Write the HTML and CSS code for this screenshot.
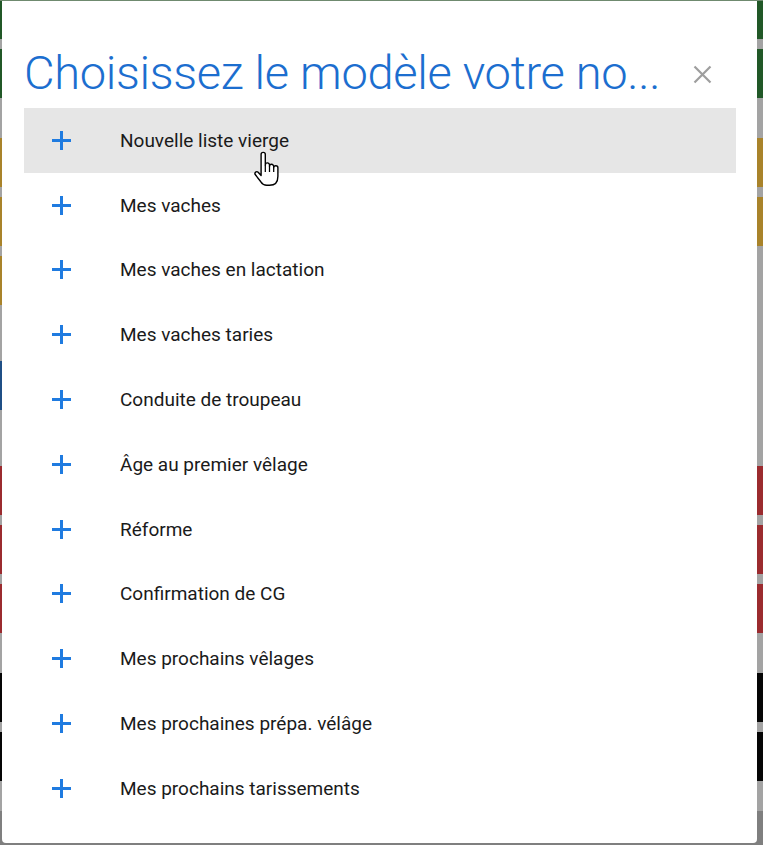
FILE: index.html
```html
<!DOCTYPE html>
<html lang="fr">
<head>
    <meta charset="UTF-8">
    <meta name="viewport" content="width=device-width, initial-scale=1.0">
    <title>Choisissez le modèle</title>
    <link rel="stylesheet" href="styles.css">
</head>
<body>

    <!-- page behind the dialog, dimmed -->
    <div class="backdrop">
        <div class="bg-line"></div>
        <div class="bg-row first"><span class="cell green"></span><span class="cell green"></span></div>
        <div class="bg-row gap-s"><span class="cell green"></span><span class="cell green"></span></div>
        <div class="bg-row gap-m"><span class="cell gold"></span><span class="cell gold"></span></div>
        <div class="bg-row gap-s"><span class="cell gold"></span><span class="cell gold"></span></div>
        <div class="bg-row gap-s"><span class="cell gold"></span><span class="cell"></span></div>
        <div class="bg-row gap-l"><span class="cell blue"></span><span class="cell"></span></div>
        <div class="bg-row gap-l"><span class="cell red"></span><span class="cell red"></span></div>
        <div class="bg-row gap-s"><span class="cell red"></span><span class="cell red"></span></div>
        <div class="bg-row gap-s"><span class="cell red"></span><span class="cell red"></span></div>
        <div class="bg-row gap-m"><span class="cell black"></span><span class="cell black"></span></div>
        <div class="bg-row gap-s"><span class="cell black"></span><span class="cell black"></span></div>
        <div class="bg-footer"></div>
    </div>

    <div class="modal">
        <div class="modal-header">
            <h1 class="modal-title" title="Choisissez le modèle votre nouvelle liste">Choisissez le modèle votre no...</h1>
            <button class="close-btn" aria-label="Fermer">
                <svg width="19" height="19" viewBox="0 0 19 19"><path d="M1.5 1.5 L17.5 17.5 M17.5 1.5 L1.5 17.5" stroke="#9e9e9e" stroke-width="2.2" fill="none"/></svg>
            </button>
        </div>

        <ul class="template-list">
            <li class="template hover">
                <span class="plus"></span>
                <span class="label">Nouvelle liste vierge</span>
                <!-- mouse pointer -->
                <svg class="pointer" width="28" height="35" viewBox="0 0 20 25">
                    <path d="M6.5 2.5 a1.5 1.5 0 0 1 3 0 V10 a1.5 1.5 0 0 1 3 0 V11 a1.5 1.5 0 0 1 3 0 V12 a1.5 1.5 0 0 1 3 0 V18 c0 4 -2 6.5 -6 6.5 H10.5 c-2 0 -3.2 -1 -4.2 -2.5 L2.3 16.8 c-0.8 -1.3 0.9 -2.8 2.1 -1.6 L6.5 17.5 Z" fill="#fff" stroke="#000" stroke-width="1" stroke-linejoin="round"/>
                    <path d="M9.5 10 V15 M12.5 11 V15 M15.5 12 V15" stroke="#000" stroke-width="0.9"/>
                </svg>
            </li>
            <li class="template"><span class="plus"></span><span class="label">Mes vaches</span></li>
            <li class="template"><span class="plus"></span><span class="label">Mes vaches en lactation</span></li>
            <li class="template"><span class="plus"></span><span class="label">Mes vaches taries</span></li>
            <li class="template"><span class="plus"></span><span class="label">Conduite de troupeau</span></li>
            <li class="template"><span class="plus"></span><span class="label">Âge au premier vêlage</span></li>
            <li class="template"><span class="plus"></span><span class="label">Réforme</span></li>
            <li class="template"><span class="plus"></span><span class="label">Confirmation de CG</span></li>
            <li class="template"><span class="plus"></span><span class="label">Mes prochains vêlages</span></li>
            <li class="template"><span class="plus"></span><span class="label">Mes prochaines prépa. vélâge</span></li>
            <li class="template"><span class="plus"></span><span class="label">Mes prochains tarissements</span></li>
        </ul>
    </div>

</body>
</html>
```

FILE: styles.css
```css
body {
    margin: 0;
    font-family: Roboto, "Liberation Sans", sans-serif;
    background-color: #a3a3a3;
    height: 845px;
    overflow: hidden;
}

/* dimmed page behind */
.backdrop {
    display: flex;
    flex-direction: column;
    height: 845px;
}
.bg-line {
    height: 1px;
    background-color: #6f8a6f;
}
.bg-row {
    height: 49px;
    display: flex;
    justify-content: space-between;
}
.bg-row.first {
    height: 38px;
}
.gap-s { margin-top: 10px; }
.gap-m { margin-top: 40px; }
.gap-l { margin-top: 56px; }
.cell {
    width: 2px;
}
.cell + .cell {
    width: 6px;
}
.green { background-color: #215827; }
.gold { background-color: #a9832a; }
.blue { background-color: #1f4f86; }
.red { background-color: #9b2b2f; }
.black { background-color: #050505; }
.bg-footer {
    margin-top: 30px;
    flex: 1;
    background-color: #7f7f7f;
}

/* dialog */
.modal {
    position: fixed;
    top: 1px;
    left: 2px;
    width: 755px;
    height: 842px;
    box-sizing: border-box;
    background-color: #fff;
    border-radius: 0 0 4px 4px;
    padding: 0 21px 0 22px;
}
.modal-header {
    display: flex;
    align-items: center;
    padding-top: 39px;
    padding-bottom: 3px;
    height: 65px;
}
.modal-title {
    flex: 1;
    margin: 0 18px 0 0;
    font-size: 47px;
    letter-spacing: -0.3px;
    font-weight: 300;
    line-height: 56px;
    color: #1c6ecf;
    white-space: nowrap;
}
.close-btn {
    background: none;
    border: none;
    padding: 0;
    margin: 4px 24px 0 0;
    width: 19px;
    height: 19px;
    cursor: pointer;
}
.close-btn svg {
    display: block;
}

.template-list {
    list-style: none;
    margin: 0;
    padding: 0;
}
.template {
    display: flex;
    align-items: center;
    height: 64.8px;
    padding-left: 28px;
    position: relative;
}
.template.hover {
    background-color: #e6e6e6;
}
.plus {
    width: 19px;
    height: 19px;
    margin-right: 49px;
    position: relative;
}
.plus::before, .plus::after {
    content: "";
    position: absolute;
    background-color: #1f7be0;
}
.plus::before {
    left: 8px;
    top: 0;
    width: 3px;
    height: 19px;
}
.plus::after {
    left: 0;
    top: 8px;
    width: 19px;
    height: 3px;
}
.label {
    font-size: 19px;
    color: #1a1a1a;
}
.pointer {
    position: absolute;
    left: 228px;
    top: 43px;
}
```
